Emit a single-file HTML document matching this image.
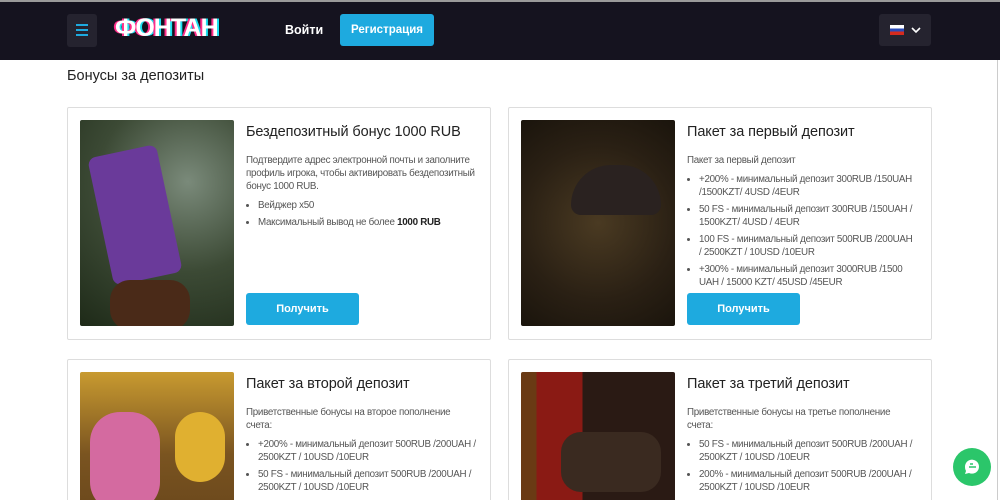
<!DOCTYPE html><html><head><meta charset="utf-8"><style>
*{box-sizing:border-box;margin:0;padding:0}
html,body{width:1000px;height:500px;overflow:hidden}
body{background:#fff;font-family:"Liberation Sans","Noto Sans CJK SC",sans-serif;position:relative}
.hd{position:absolute;left:0;top:0;width:1000px;height:60px;background:#15131f;border-top:2px solid #9a9a9a}
.burger{position:absolute;left:67px;top:12px;width:30px;height:33px;background:#25232f;border-radius:3px}
.burger i{position:absolute;left:9px;width:12px;height:2px;background:#1eaadf}
.logo{position:absolute;left:115px;top:12px;font:900 25px "Liberation Sans",sans-serif;color:#fff;letter-spacing:-1px;text-shadow:-2px 0 #ff2d8a,2px 0 #1ee0f0}
.login{position:absolute;left:285px;top:21px;color:#fff;font-weight:bold;font-size:12.5px}
.reg{position:absolute;left:340px;top:12px;width:94px;height:32px;background:#1eaadf;border-radius:3px;color:#fff;font-weight:bold;font-size:11.5px;text-align:center;line-height:32px}
.lang{position:absolute;left:879px;top:12px;width:52px;height:32px;background:#25232f;border-radius:3px}
h1{position:absolute;left:67px;top:68px;font-size:14.5px;font-weight:normal;color:#222}
.card{position:absolute;width:424px;height:233px;border:1px solid #ddd;border-radius:2px;background:#fff}
.img{position:absolute;left:12px;top:12px;width:154px;height:206px;border-radius:2px;overflow:hidden}
.tx{position:absolute;left:178px;top:15px;width:230px;color:#555;font-size:9.8px;line-height:13px;letter-spacing:-0.28px}
.tx h2{font-size:14.5px;font-weight:normal;color:#222;margin-bottom:13px;line-height:18px;letter-spacing:-0.1px}
.tx p{margin-bottom:6px}
.tx ul{padding-left:12px}
.tx li{margin-bottom:4px}
.btn{position:absolute;left:178px;top:185px;width:113px;height:32px;background:#1eaadf;border-radius:3px;color:#fff;font-weight:bold;font-size:11px;text-align:center;line-height:32px}
.chat{position:absolute;left:953px;top:448px;width:38px;height:38px;border-radius:50%;background:#2bc66a}
</style></head><body>
<div class="hd">
<div class="burger"><i style="top:10px"></i><i style="top:15px"></i><i style="top:20px"></i></div>
<div class="logo">ФОНТАН</div>
<div class="login">Войти</div>
<div class="reg">Регистрация</div>
<div class="lang"><div style="position:absolute;left:11px;top:11px;width:14px;height:10px;background:linear-gradient(#fff 33%,#2a4bb8 33% 66%,#d52b1e 66%)"></div><svg style="position:absolute;left:32px;top:12px" width="10" height="8"><path d="M1 2l4 4 4-4" stroke="#fff" stroke-width="1.6" fill="none"/></svg></div>
</div>
<div style="position:absolute;left:997px;top:60px;width:1px;height:440px;background:#ccc"></div>
<h1>Бонусы за депозиты</h1>

<div class="card" style="left:67px;top:107px">
<div class="img" style="background:radial-gradient(circle at 70% 30%,#7a8a7a,#3c4a35 50%,#1e2a18)"><div style="position:absolute;left:20px;top:30px;width:70px;height:130px;background:#6a3a9a;border-radius:8px;transform:rotate(-12deg)"></div><div style="position:absolute;left:30px;top:160px;width:80px;height:50px;background:#4a2a18;border-radius:20px"></div></div>
<div class="tx"><h2>Бездепозитный бонус 1000 RUB</h2><p>Подтвердите адрес электронной почты и заполните профиль игрока, чтобы активировать бездепозитный бонус 1000 RUB.</p><ul><li>Вейджер x50</li><li>Максимальный вывод не более <b style="color:#222">1000 RUB</b></li></ul></div>
<div class="btn">Получить</div>
</div>

<div class="card" style="left:508px;top:107px">
<div class="img" style="background:radial-gradient(circle at 50% 50%,#4a3a22,#2a2014 60%,#1a140c)"><div style="position:absolute;left:50px;top:45px;width:90px;height:50px;background:#2a2220;border-radius:40px 40px 10px 10px"></div></div>
<div class="tx"><h2>Пакет за первый депозит</h2><p>Пакет за первый депозит</p><ul><li>+200% - минимальный депозит 300RUB /150UAH /1500KZT/ 4USD /4EUR</li><li>50 FS - минимальный депозит 300RUB /150UAH / 1500KZT/ 4USD / 4EUR</li><li>100 FS - минимальный депозит 500RUB /200UAH / 2500KZT / 10USD /10EUR</li><li>+300% - минимальный депозит 3000RUB /1500 UAH / 15000 KZT/ 45USD /45EUR</li></ul></div>
<div class="btn">Получить</div>
</div>

<div class="card" style="left:67px;top:359px">
<div class="img" style="background:linear-gradient(#c89a30,#7a5420 40%,#5a3a18)"><div style="position:absolute;left:10px;top:40px;width:70px;height:100px;background:#d46aa0;border-radius:30px"></div><div style="position:absolute;left:95px;top:40px;width:50px;height:70px;background:#e0b030;border-radius:25px"></div></div>
<div class="tx"><h2>Пакет за второй депозит</h2><p>Приветственные бонусы на второе пополнение счета:</p><ul><li>+200% - минимальный депозит 500RUB /200UAH / 2500KZT / 10USD /10EUR</li><li>50 FS - минимальный депозит 500RUB /200UAH / 2500KZT / 10USD /10EUR</li></ul></div>
</div>

<div class="card" style="left:508px;top:359px">
<div class="img" style="background:linear-gradient(90deg,#6a3a14 0 10%,#8a1a14 10% 40%,#2a1a14 40%)"><div style="position:absolute;left:40px;top:60px;width:100px;height:60px;background:#3a2a20;border-radius:20px"></div></div>
<div class="tx"><h2>Пакет за третий депозит</h2><p>Приветственные бонусы на третье пополнение счета:</p><ul><li>50 FS - минимальный депозит 500RUB /200UAH / 2500KZT / 10USD /10EUR</li><li>200% - минимальный депозит 500RUB /200UAH / 2500KZT / 10USD /10EUR</li></ul></div>
</div>

<div class="chat"><svg width="38" height="38"><path d="M12 19a7 7 0 1 1 4 6l-4 1 1-3a7 7 0 0 1-1-4z" fill="#fff"/><path d="M16 19h7M17 16h3" stroke="#2bc66a" stroke-width="1.5"/></svg></div>
</body></html>
